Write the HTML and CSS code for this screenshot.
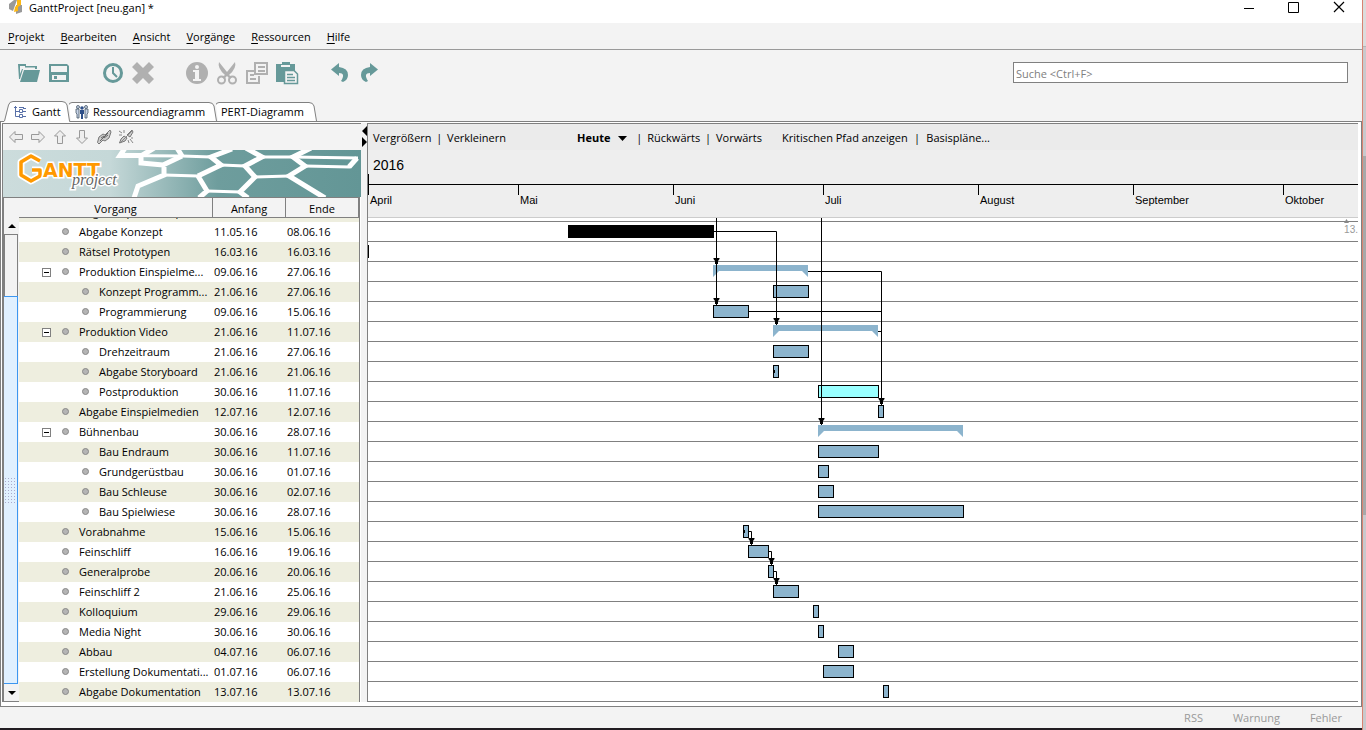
FILE: index.html
```html
<!DOCTYPE html>
<html lang="de">
<head>
<meta charset="utf-8">
<title>GanttProject [neu.gan] *</title>
<link rel="stylesheet" href="styles.css">
</head>
<body>
<div class="window">
  <header class="titlebar">
    <svg class="app-icon" width="16" height="15" viewBox="0 0 16 15"><path d="M1 4L6 0H9L5 11L1 9ZM8 5H14V12L8 14Z" fill="#999"/><path d="M9 0H13V5L10 7V11L6 12L7 7L9 5Z" fill="#fdb813"/></svg>
    <h1 class="title">GanttProject [neu.gan] *</h1>
    <button class="win-btn" aria-label="Minimieren"><svg width="12" height="12"><path d="M1 7.500H11" stroke="#000"/></svg></button>
    <button class="win-btn" aria-label="Maximieren"><svg width="12" height="12"><path d="M.5 1.500H10.500V11.500H.5Z" fill="none" stroke="#000"/></svg></button>
    <button class="win-btn" aria-label="Schließen"><svg width="12" height="12"><path d="M1 1L11 11M11 1L1 11" stroke="#000" stroke-width="1.200"/></svg></button>
  </header>
  <nav class="menubar">
    <button><u>P</u>rojekt</button><button><u>B</u>earbeiten</button><button><u>A</u>nsicht</button><button><u>V</u>orgänge</button><button><u>R</u>essourcen</button><button><u>H</u>ilfe</button>
  </nav>
  <div class="toolbar">
    <div class="tools">
      <button aria-label="Öffnen"><svg viewBox="0 0 24 24"><path d="M1 3H9V5H20V8H6L3 18H2Z" fill="#699"/><path d="M3 5H8V6.500H18V8H5L3 13Z" fill="#f3f3f3"/><path d="M7 9H23L20 21H3Z" fill="#699"/></svg></button>
      <button aria-label="Speichern"><svg viewBox="0 0 24 24"><path fill-rule="evenodd" d="M2 3H20L22 5V21H2ZM4 5V11H20V5ZM5 14V19H19V14ZM7 15H10V18H7Z" fill="#699"/></svg></button>
      <button class="gap-before" aria-label="Zeit"><svg viewBox="0 0 24 24"><circle cx="12" cy="12" r="8.500" fill="none" stroke="#699" stroke-width="3"/><path d="M12 6V12L16 16" fill="none" stroke="#699" stroke-width="2"/></svg></button>
      <button aria-label="Löschen"><svg viewBox="0 0 24 24"><path d="M6 1L12 7L18 1L23 6L17 12L23 18L18 23L12 17L6 23L1 18L7 12L1 6Z" fill="#b0b0b0"/></svg></button>
      <button class="gap-before" aria-label="Eigenschaften"><svg viewBox="0 0 24 24"><circle cx="12" cy="12" r="11" fill="#b0b0b0"/><circle cx="12" cy="6" r="2" fill="#f3f3f3"/><path d="M8 9H14V18H16V20H8V18H10V11H8Z" fill="#f3f3f3"/></svg></button>
      <button aria-label="Ausschneiden"><svg viewBox="0 0 24 24"><path d="M4 1L12 11L20 1Q22 7 14 14L17 16L15 18L12 15L9 18L7 16L10 14Q2 7 4 1Z" fill="#b0b0b0"/><g fill="none" stroke="#b0b0b0" stroke-width="2"><circle cx="6.500" cy="19" r="3.500"/><circle cx="17.500" cy="19" r="3.500"/></g></svg></button>
      <button aria-label="Kopieren"><svg viewBox="0 0 24 24" fill="none" stroke="#b0b0b0" stroke-width="2"><path d="M10 2H22V13H10ZM13 6H20M13 10H20M9 10H2V22H14V15M5 14H9M5 18H11"/></svg></button>
      <button aria-label="Einfügen"><svg viewBox="0 0 24 24"><path d="M1 3H7V1H15V3H20V21H1Z" fill="#699"/><path d="M6 4H15V6H6Z" fill="#f3f3f3"/><path d="M9.500 9.500H19L22.500 13V22.500H9.500Z" fill="#f3f3f3" stroke="#699" stroke-width="1.500"/><path d="M12 13.500H18M12 16.500H20M12 19.500H20" stroke="#699" stroke-width="1.500"/></svg></button>
      <button class="gap-before" aria-label="Rückgängig"><svg viewBox="0 0 24 24"><path d="M2 8.500L10 2V6Q19 7 19 14Q19 19 14 21L12 20Q17 12 10 12V15Z" fill="#699"/></svg></button>
      <button aria-label="Wiederholen"><svg viewBox="0 0 24 24"><path d="M19 8.500L11 2V6Q2 7 2 14Q2 19 7 21L9 20Q4 12 11 12V15Z" fill="#699"/></svg></button>
    </div>
    <input class="search" type="text" aria-label="Suche" placeholder="Suche &lt;Ctrl+F&gt;">
  </div>
  <nav class="tabs">
    <button class="tab tab-gantt"><svg class="tab-shape" width="66" height="22"><path d="M0 20.500L1 20L5 4Q6 .5 9 .5H58Q62 .5 63 4L65.500 22H0Z" fill="#fff"/><path d="M.5 20L4.500 4Q5.500 .5 9 .5H58Q62 .5 63 4L65.500 20" fill="none" stroke="#808080"/></svg><svg class="tab-icon" width="12" height="12" fill="none" stroke="#5870a8"><path d="M1.500 0V10.500H5M1.500 5.500H5M0 1.500H3M9 2.500H12M9 5.500H12M9 10.500H12"/><path d="M5.500 3.500H8.500V6.500H5.500ZM5.500 8.500H8.500V11.500H5.500ZM5 1.500H10"/></svg><span>Gantt</span></button>
    <button class="tab tab-res"><svg class="tab-shape" width="148" height="22"><path d="M0 4L3 1.500H140Q144 1.500 145 5L147.500 20H2Z" fill="#fff"/><path d="M-1 5Q0 1.500 3 1.500H140Q144 1.500 145 5L147.500 20" fill="none" stroke="#808080"/></svg><svg class="tab-icon" width="14" height="14"><g fill="#c8d4e8" stroke="#456" stroke-width=".8"><circle cx="3" cy="2" r="1.500"/><circle cx="11" cy="2" r="1.500"/><path d="M1 4H4V13H2V9L1 8ZM10 4H13V8L12 9V13H10Z"/></g><circle cx="7" cy="3" r="1.800" fill="#2e4f88"/><path d="M5 5H9V9H8V14H6V9H5Z" fill="#2e4f88"/></svg><span>Ressourcendiagramm</span></button>
    <button class="tab tab-pert"><svg class="tab-shape" width="101" height="22"><path d="M0 4L3 1.500H93Q97 1.500 98 5L100.500 20H2Z" fill="#fff"/><path d="M-1 5Q0 1.500 3 1.500H93Q97 1.500 98 5L100.500 20" fill="none" stroke="#808080"/></svg><span>PERT-Diagramm</span></button>
  </nav>
  <main class="pane">
    <section class="tree-panel">
      <div class="tree-tools">
        <button aria-label="Ausrücken"><svg viewBox="0 0 16 16"><path d="M1.500 8L7 2.500V5.500H14.500V10.500H7V13.500Z"/></svg></button>
        <button aria-label="Einrücken"><svg viewBox="0 0 16 16"><path d="M14.500 8L9 2.500V5.500H1.500V10.500H9V13.500Z"/></svg></button>
        <button aria-label="Nach oben"><svg viewBox="0 0 16 16"><path d="M8 1.500L13.500 7H10.500V14.500H5.500V7H2.500Z"/></svg></button>
        <button aria-label="Nach unten"><svg viewBox="0 0 16 16"><path d="M8 14.500L13.500 9H10.500V1.500H5.500V9H2.500Z"/></svg></button>
        <button aria-label="Verknüpfen"><svg viewBox="0 0 16 16"><path d="M1.500 13.500L3 8L7 5L9 6L14 1L15 3L13 9L9 12L7 11L3 15Z" fill="#ccc" stroke="#777"/><path d="M4 12L12 4M5 9L8 7M8 9L12 6" fill="none" stroke="#666"/></svg></button>
        <button aria-label="Trennen"><svg viewBox="0 0 16 16"><path d="M1.500 14L3 10L6 7L9 9L7 12ZM9 6L14 1L15 3L12 8Z" fill="#ccc" stroke="#777"/><path d="M3 13L14 2M1 2L4 4M6 1V4M1 6H4M10 11L11 14M12 10L15 14M13 9H15" stroke="#888"/></svg></button>
      </div>
      <svg class="banner" viewBox="0 0 358 47" preserveAspectRatio="none" role="img" aria-label="GanttProject">
        <defs><linearGradient id="sea"><stop offset="0" stop-color="#ccdcdc"/><stop offset=".3" stop-color="#c5d8d8"/><stop offset=".6" stop-color="#6e9d9d"/><stop offset="1" stop-color="#639696"/></linearGradient></defs>
        <path d="M0 0H358V47H0Z" fill="url(#sea)"/>
        <path d="M122 -2L117 5.500H138M151 -2L138 6V13L160 15M174 -2L179 6M161 15V25L135 36L131 48M195 26L204 41L196 48M229 -1L208 7L218 15L195 26M243 -2L259 7L242 16L252 27L237 42L245 48M308 -2L290 7L302 16L286 26L322 48M354 8L346 17M160 15L179 6" fill="none" stroke="#fff" stroke-width="5"/>
        <path d="M117 5.500L179 6L208 7M161 25L195 26M218 15L242 16M204 41L237 42M252 27L286 26M259 7H290L355 8M347 17L302 16" fill="none" stroke="#fff" stroke-width="3"/>
        <g fill="none" stroke-linejoin="round"><path d="M37 11L28 6L18 12V25L28 31L37 26V20H29" stroke="#fff" stroke-width="7"/><path d="M37 11L28 6L18 12V25L28 31L37 26V20H29" stroke="#f90" stroke-width="3.500"/></g>
        <text class="logo-name" x="40" y="27">ANTT</text>
        <text class="logo-sub" x="69" y="35">project</text>
      </svg>
      <div class="tree-body">
        <div class="scrollbar" aria-hidden="true"><span class="scroll-btn"><svg width="8" height="4"><path d="M0 4L4 0L8 4Z"/></svg></span><span class="thumb"></span><span class="track"></span><span class="scroll-btn"><svg width="8" height="4"><path d="M0 0L4 4L8 0Z"/></svg></span></div>
        <table class="tasks">
          <colgroup><col><col class="date"><col class="date"></colgroup>
          <thead><tr><th>Vorgang</th><th>Anfang</th><th>Ende</th></tr></thead>
          <tbody>
            <tr class="cut"><td><div>Abgabe Spielkonzepte</div></td><td></td><td></td></tr>
            <tr><td><i class="dot"></i>Abgabe Konzept</td><td>11.05.16</td><td>08.06.16</td></tr>
            <tr><td><i class="dot"></i>Rätsel Prototypen</td><td>16.03.16</td><td>16.03.16</td></tr>
            <tr><td><button class="fold" aria-label="Einklappen"></button><i class="dot"></i>Produktion Einspielme...</td><td>09.06.16</td><td>27.06.16</td></tr>
            <tr class="sub"><td><i class="dot"></i>Konzept Programm...</td><td>21.06.16</td><td>27.06.16</td></tr>
            <tr class="sub"><td><i class="dot"></i>Programmierung</td><td>09.06.16</td><td>15.06.16</td></tr>
            <tr><td><button class="fold" aria-label="Einklappen"></button><i class="dot"></i>Produktion Video</td><td>21.06.16</td><td>11.07.16</td></tr>
            <tr class="sub"><td><i class="dot"></i>Drehzeitraum</td><td>21.06.16</td><td>27.06.16</td></tr>
            <tr class="sub"><td><i class="dot"></i>Abgabe Storyboard</td><td>21.06.16</td><td>21.06.16</td></tr>
            <tr class="sub"><td><i class="dot"></i>Postproduktion</td><td>30.06.16</td><td>11.07.16</td></tr>
            <tr><td><i class="dot"></i>Abgabe Einspielmedien</td><td>12.07.16</td><td>12.07.16</td></tr>
            <tr><td><button class="fold" aria-label="Einklappen"></button><i class="dot"></i>Bühnenbau</td><td>30.06.16</td><td>28.07.16</td></tr>
            <tr class="sub"><td><i class="dot"></i>Bau Endraum</td><td>30.06.16</td><td>11.07.16</td></tr>
            <tr class="sub"><td><i class="dot"></i>Grundgerüstbau</td><td>30.06.16</td><td>01.07.16</td></tr>
            <tr class="sub"><td><i class="dot"></i>Bau Schleuse</td><td>30.06.16</td><td>02.07.16</td></tr>
            <tr class="sub"><td><i class="dot"></i>Bau Spielwiese</td><td>30.06.16</td><td>28.07.16</td></tr>
            <tr><td><i class="dot"></i>Vorabnahme</td><td>15.06.16</td><td>15.06.16</td></tr>
            <tr><td><i class="dot"></i>Feinschliff</td><td>16.06.16</td><td>19.06.16</td></tr>
            <tr><td><i class="dot"></i>Generalprobe</td><td>20.06.16</td><td>20.06.16</td></tr>
            <tr><td><i class="dot"></i>Feinschliff 2</td><td>21.06.16</td><td>25.06.16</td></tr>
            <tr><td><i class="dot"></i>Kolloquium</td><td>29.06.16</td><td>29.06.16</td></tr>
            <tr><td><i class="dot"></i>Media Night</td><td>30.06.16</td><td>30.06.16</td></tr>
            <tr><td><i class="dot"></i>Abbau</td><td>04.07.16</td><td>06.07.16</td></tr>
            <tr><td><i class="dot"></i>Erstellung Dokumentati...</td><td>01.07.16</td><td>06.07.16</td></tr>
            <tr><td><i class="dot"></i>Abgabe Dokumentation</td><td>13.07.16</td><td>13.07.16</td></tr>
          </tbody>
        </table>
      </div>
    </section>
    <div class="splitter"><svg width="6" height="24"><path d="M6 3V13L1 8ZM1 14V24L6 19Z"/></svg></div>
    <section class="chart">
      <div class="chart-tools">
        <div class="group zoom"><button>Vergrößern</button><span>|</span><button>Verkleinern</button></div>
        <div class="group scroll"><button class="today"><b>Heute</b><svg width="9" height="5"><path d="M0 0H9L4.500 5Z"/></svg></button><span>|</span><button>Rückwärts</button><span>|</span><button>Vorwärts</button></div>
        <div class="group path"><button>Kritischen Pfad anzeigen</button><span>|</span><button>Basispläne...</button></div>
      </div>
      <div class="year">2016</div>
      <div class="months"><span style="--days:30">April</span><span style="--days:31">Mai</span><span style="--days:30">Juni</span><span style="--days:31">Juli</span><span style="--days:31">August</span><span style="--days:30">September</span><span style="--days:15">Oktober</span></div>
      <div class="canvas">
        <div class="row"><i class="bar done" style="--from:40;--days:29"></i></div>
        <div class="row"><i class="past"></i></div>
        <div class="row"><i class="sum" style="--from:69;--days:19"></i></div>
        <div class="row"><i class="bar" style="--from:81;--days:7"></i></div>
        <div class="row"><i class="bar" style="--from:69;--days:7"></i></div>
        <div class="row"><i class="sum" style="--from:81;--days:21"></i></div>
        <div class="row"><i class="bar" style="--from:81;--days:7"></i></div>
        <div class="row"><i class="bar begun" style="--from:81;--days:1"></i></div>
        <div class="row"><i class="bar cyan" style="--from:90;--days:12"></i></div>
        <div class="row"><i class="bar" style="--from:102;--days:1"></i></div>
        <div class="row"><i class="sum" style="--from:90;--days:29"></i></div>
        <div class="row"><i class="bar" style="--from:90;--days:12"></i></div>
        <div class="row"><i class="bar" style="--from:90;--days:2"></i></div>
        <div class="row"><i class="bar" style="--from:90;--days:3"></i></div>
        <div class="row"><i class="bar" style="--from:90;--days:29"></i></div>
        <div class="row"><i class="bar begun" style="--from:75;--days:1"></i></div>
        <div class="row"><i class="bar" style="--from:76;--days:4"></i></div>
        <div class="row"><i class="bar" style="--from:80;--days:1"></i></div>
        <div class="row"><i class="bar" style="--from:81;--days:5"></i></div>
        <div class="row"><i class="bar" style="--from:89;--days:1"></i></div>
        <div class="row"><i class="bar" style="--from:90;--days:1"></i></div>
        <div class="row"><i class="bar" style="--from:94;--days:3"></i></div>
        <div class="row"><i class="bar" style="--from:91;--days:6"></i></div>
        <div class="row"><i class="bar" style="--from:103;--days:1"></i></div>
        <svg class="links" width="620" height="484" aria-hidden="true">
          <defs><path id="tip" d="M-3 -6H3V-5L1.500 -3V0H-1.500V-3L-3 -5Z"/></defs>
          <path fill="none" stroke="#000" d="M348.500 0V87M346 13.500H408.500V107M453.500 0V207M440 53.500H513.500V187M381 93.500H513M510 113.500H513M380 313.500H383.500V327M400 333.500H403.500V347M405 353.500H408.500V367"/>
          <use href="#tip" x="348.500" y="46"/><use href="#tip" x="348.500" y="86"/><use href="#tip" x="408.500" y="106"/><use href="#tip" x="513.500" y="186"/><use href="#tip" x="453.500" y="206"/><use href="#tip" x="383.500" y="326"/><use href="#tip" x="403.500" y="346"/><use href="#tip" x="408.500" y="366"/>
        </svg>
        <div class="marker"><svg width="5" height="4"><path d="M0 4L2.500 0L5 4Z"/></svg><span>13.</span></div>
      </div>
    </section>
  </main>
  <footer class="statusbar"><button>RSS</button><button>Warnung</button><button>Fehler</button></footer>
</div>
<div class="desktop-edge"></div>
</body>
</html>
```
FILE: styles.css
```css
* { box-sizing: border-box; }
body {
  margin: 0;
  height: 100vh;
  display: grid;
  grid-template-columns: 1fr 4px;
  overflow: hidden;
  font: 11px/16px "Open Sans", "Noto Sans", sans-serif;
  color: #000;
}
button {
  border: 0;
  padding: 0;
  background: none;
  font: inherit;
  color: inherit;
  white-space: nowrap;
}
svg { display: block; flex: none; }
.window {
  display: flex;
  flex-direction: column;
  min-width: 0;
  height: 100vh;
  background: #f3f3f3;
  border-bottom: 2px solid #221c22;
}
.desktop-edge {
  border-left: 1px solid #d98271;
  background: linear-gradient(#dcdcdc 46px, #b4b4b4 46px, #b4b4b4 47px, #c9c9cc 47px, #c9c9cc 156px, #a8a8a8 156px, #a8a8a8 515px, #c9c9cc 515px);
}

/* title and menu */
.titlebar { display: flex; height: 23px; background: #fff; padding-right: 17px; }
.app-icon { margin-left: 8px; }
.title { flex: 1; margin: 0 0 0 5px; font-size: inherit; line-height: 16px; font-weight: 400; }
.win-btn { width: 12px; height: 13px; margin-left: 33px; }
.menubar {
  display: flex;
  gap: 16px;
  height: 27px;
  padding: 2px 0 0 8px;
  border-bottom: 1px solid #999;
}
.menubar u { text-underline-offset: 2px; }

/* main tool bar */
.toolbar { display: flex; justify-content: space-between; align-items: center; height: 45px; padding: 0 14px 0 17px; }
.tools { display: flex; gap: 6px; }
.tools svg { width: 24px; height: 24px; }
.tools .gap-before { margin-left: 24px; }
.search {
  width: 335px;
  height: 21px;
  padding: 2px 2px 0;
  border: 1px solid #808080;
  background: #fff;
  font: inherit;
}
.search::placeholder { color: #808080; }

/* tabs */
.tabs { display: flex; height: 26px; padding: 6px 0 0 4px; position: relative; z-index: 1; }
.tab { position: relative; display: flex; align-items: center; gap: 6px; height: 20px; padding-top: 1px; }
.tab-shape { position: absolute; left: 0; top: 0; }
.tab > span, .tab-icon { position: relative; }
.tab-gantt { width: 65px; padding-left: 10px; }
.tab-res { width: 147px; padding-left: 6px; gap: 4px; }
.tab-pert { width: 100px; padding-left: 5px; }

/* pane */
.pane {
  flex: 1;
  display: flex;
  min-height: 0;
  padding: 1px 3px 4px 1px;
  border: 1px solid #808080;
  background: #fff;
}
.tree-panel {
  flex: 0 0 359px;
  display: flex;
  flex-direction: column;
  border: solid #808080;
  border-width: 1px 0 0 1px;
}
.tree-tools { display: flex; gap: 6px; align-items: center; height: 26px; padding-left: 5px; background: #f3f3f3; }
.tree-tools svg { width: 16px; height: 16px; fill: #eee; stroke: #999; }
.banner { width: 100%; height: 47px; }
.logo-name {
  font: bold 19px "DejaVu Sans", sans-serif;
  fill: #f90;
  stroke: #fff;
  stroke-width: 3px;
  paint-order: stroke;
}
.logo-sub {
  font: italic 16px "Liberation Serif", serif;
  fill: #666;
  stroke: #fff;
  stroke-width: 3px;
  paint-order: stroke;
}
.tree-body {
  flex: 1;
  display: flex;
  min-height: 0;
  margin-right: 1px;
  border: solid #808080;
  border-width: 1px 1px 1px 0;
}
.scrollbar {
  flex: none;
  width: 16px;
  display: flex;
  flex-direction: column;
  padding-top: 19px;
  border-left: 1px solid #808080;
  background: #f3f3f3;
}
.scroll-btn { height: 17px; display: grid; place-items: center; }
.thumb { height: 62px; border: 1px solid #808080; border-bottom: 0; width: 14px; }
.track {
  flex: 1;
  width: 14px;
  border: solid #3c96f0;
  border-width: 1px 1px 1px 0;
  background: #e0f0ff radial-gradient(#aac 1px, transparent 1px);
  background-size: 3px 3px;
  background-clip: padding-box;
  box-shadow: inset 0 180px #e0f0ff, inset 0 -180px #e0f0ff;
}
.tasks { width: calc(100% - 16px); border-collapse: separate; border-spacing: 0; table-layout: fixed; align-self: flex-start; background: #fff; }
.tasks .date { width: 73px; }
.tasks th {
  height: 20px;
  padding: 3px 0 0;
  font-weight: 400;
  background: #f3f3f3;
  border: solid #808080;
  border-width: 0 1px 1px 0;
}
.tasks td { height: 20px; padding: 0 0 0 1px; white-space: nowrap; }
.tasks td:first-child { padding-left: 43px; }
.tasks .sub td:first-child { padding-left: 63px; }
.tasks tr:nth-child(odd) td { background: #eeeedf; }
.tasks .cut td { height: 4px; line-height: 0; }
.tasks .cut div { height: 4px; line-height: 20px; margin-left: 17px; overflow: hidden; display: flex; align-items: flex-end; }
.dot {
  display: inline-block;
  width: 7px;
  height: 7px;
  margin-right: 10px;
  border: 1px solid #888;
  border-radius: 50%;
  background: #b4b4b4;
  vertical-align: 1px;
}
.fold {
  display: inline-block;
  width: 9px;
  height: 9px;
  margin: 0 11px 0 -20px;
  border: 1px solid #808080;
  background: linear-gradient(#000, #000) center / 5px 1px no-repeat #fff;
  vertical-align: 0;
}

/* splitter and chart */
.splitter { flex: 0 0 6px; background: #f3f3f3; }
.chart {
  flex: 1;
  min-width: 0;
  display: flex;
  flex-direction: column;
  border: solid #808080;
  border-width: 1px 0 0 1px;
}
.chart-tools { display: flex; height: 26px; padding: 2px 5px 0; align-items: center; background: #ebebeb; }
.group { display: flex; justify-content: space-between; }
.zoom { width: 133px; margin-right: 71px; }
.scroll { width: 185px; margin-right: 20px; }
.path { width: 208px; }
.today { display: flex; align-items: center; gap: 8px; margin-right: 4px; }
.year {
  height: 34px;
  padding: 7px 5px 0;
  background: linear-gradient(#000, #000) 0 100% / 1px 10px no-repeat #eee;
  font: 14px/16px "Liberation Sans", sans-serif;
}
.months {
  display: flex;
  height: 34px;
  overflow: hidden;
  border-top: 1px solid #000;
  border-bottom: 1px solid #ccc;
  background: #eee;
  font: 11px/14px "Liberation Sans", sans-serif;
}
.months span {
  flex: none;
  width: calc(var(--days) * 5px);
  padding: 8px 0 0 2px;
  background: linear-gradient(#000, #000) 0 0 / 1px 10px no-repeat;
}
.canvas { position: relative; flex: 1; padding-top: 3px; overflow: hidden; border-bottom: 1px solid #808080; }
.row { position: relative; height: 20px; border-top: 1px solid #808080; }
.bar, .sum {
  position: absolute;
  top: 3px;
  left: calc(var(--from) * 5px);
}
.bar {
  width: calc(var(--days) * 5px + 1px);
  height: 13px;
  border: 1px solid #000;
  background: #8cb4cd;
}
.done { background: #000; }
.cyan { background: #9ff; }
.begun { background: linear-gradient(#000, #000) 0 50% / 1px 3px no-repeat #8cb4cd; }
.sum {
  width: calc(var(--days) * 5px);
  height: 12px;
  background: #8cb4cd;
  clip-path: polygon(0 0, 100% 0, 100% 100%, calc(100% - 6px) 6px, 6px 6px, 0 100%);
}
.past { position: absolute; left: 0; top: 3px; width: 1px; height: 13px; background: #000; }
.links { position: absolute; left: 0; top: 0; }
.marker {
  position: absolute;
  right: 0;
  top: 1px;
  color: #999;
  fill: #888;
  font: 10px/13px "Liberation Sans", sans-serif;
}

/* status bar */
.statusbar { display: flex; justify-content: flex-end; gap: 30px; height: 21px; padding-right: 20px; color: #999; }
```
